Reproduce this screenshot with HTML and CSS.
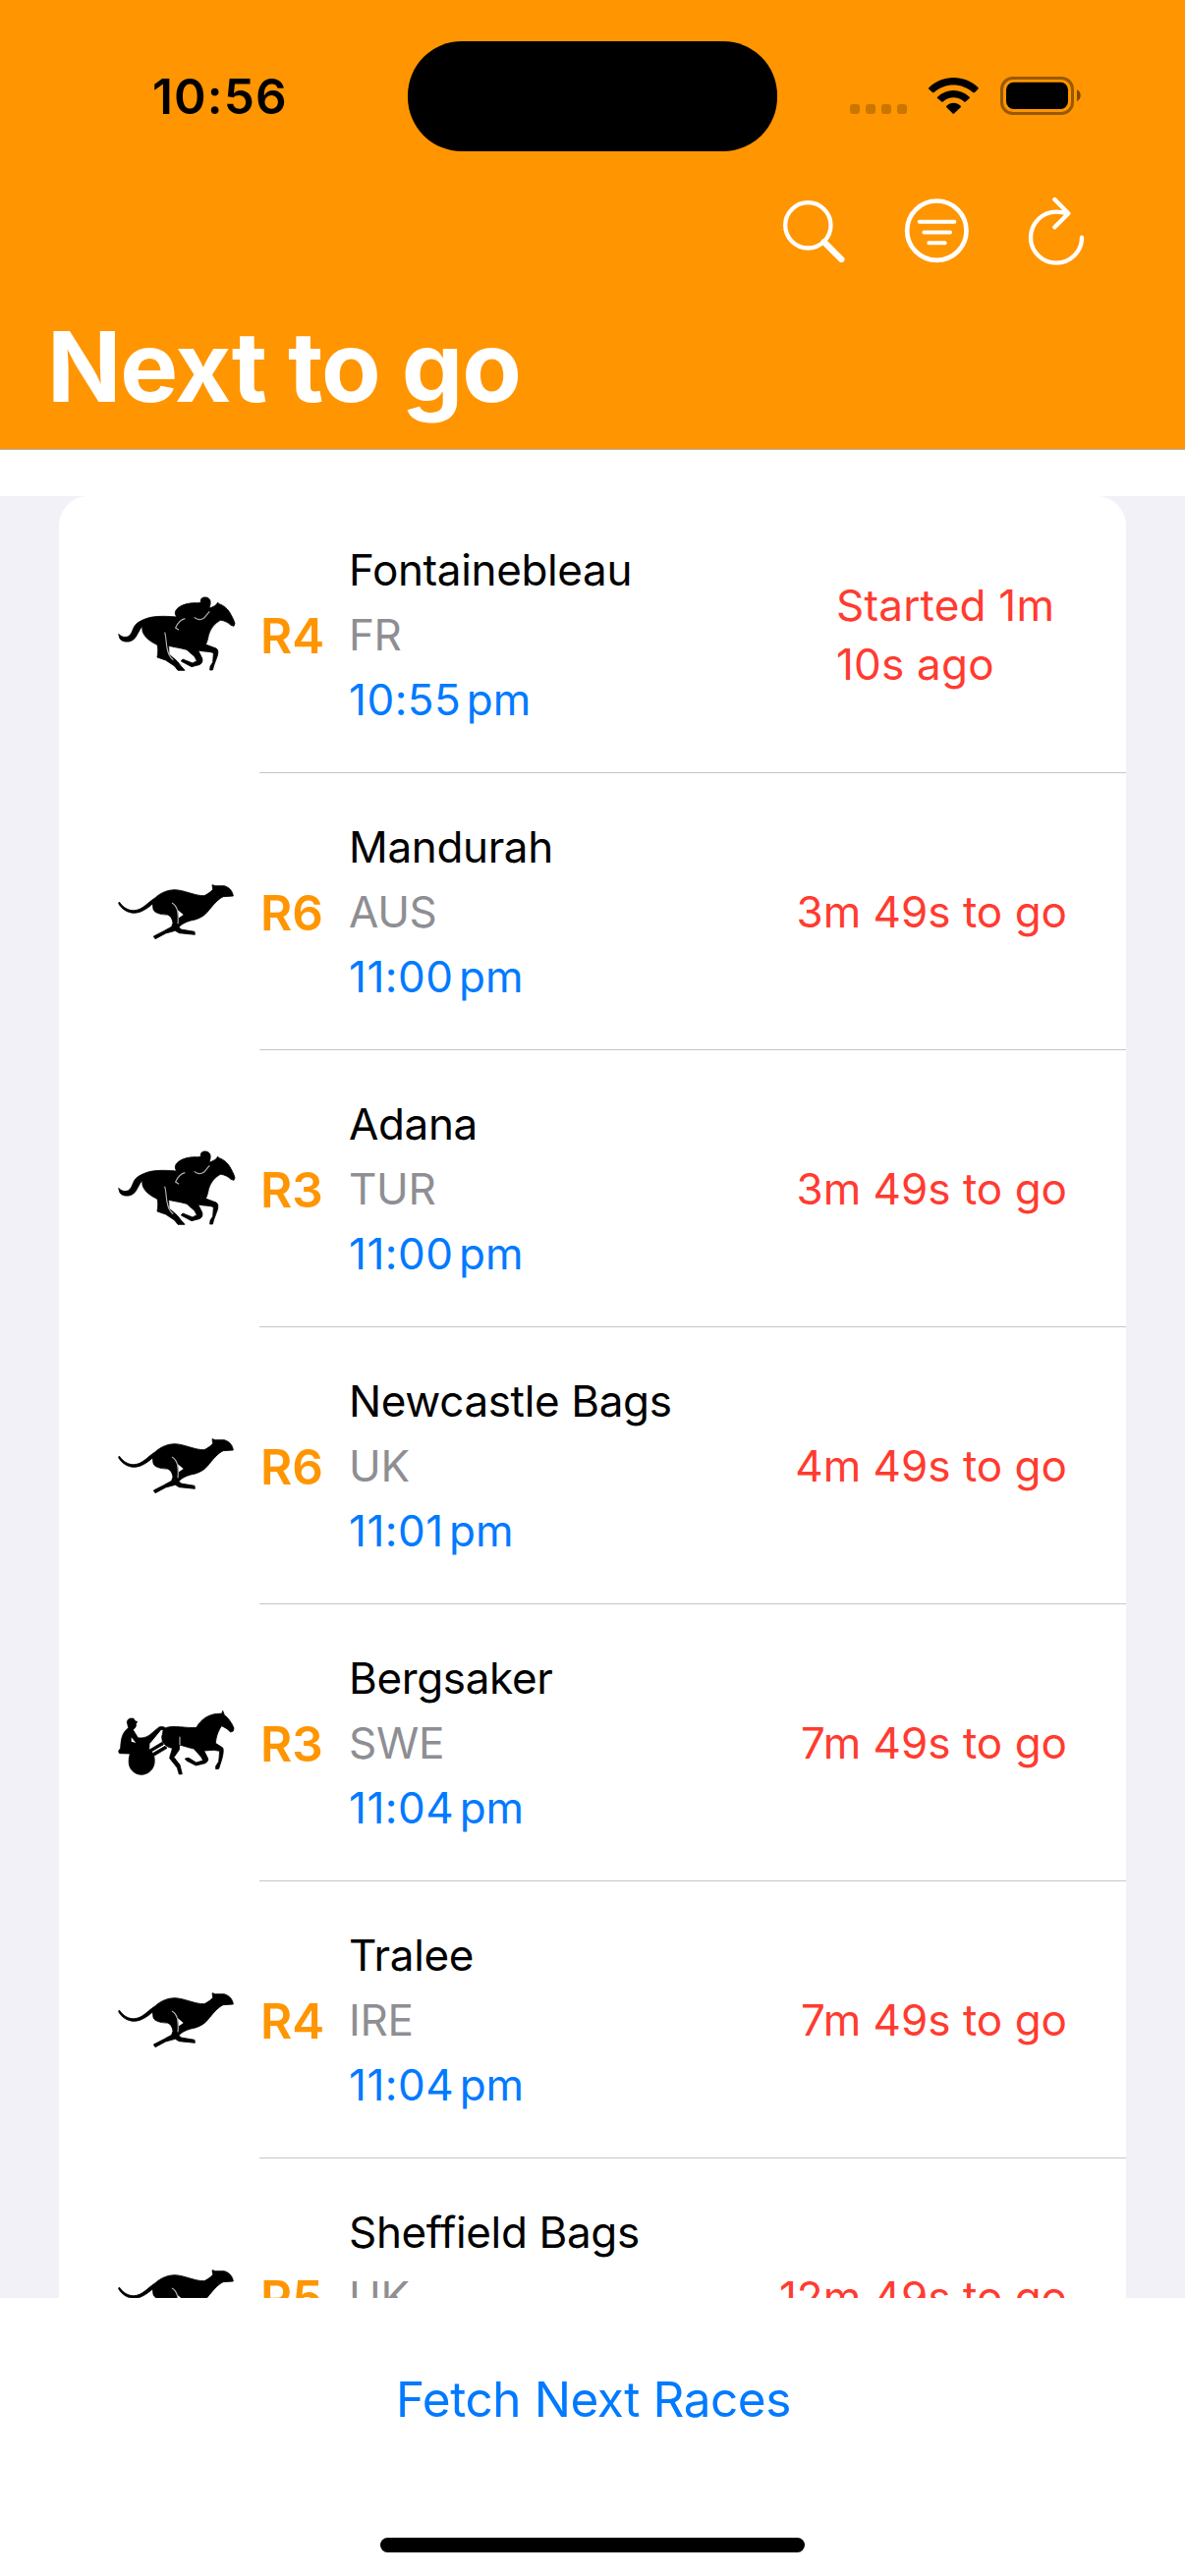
FILE: index.html
```html
<!DOCTYPE html>
<html lang="en">
<head>
<meta charset="utf-8">
<title>Next to go</title>
<link rel="stylesheet" href="styles.css">
</head>
<body>
<svg class="sprite" aria-hidden="true">
  <symbol id="horse" viewBox="60 42 360 252">
    <path class="shape" d="M62 166C70 175 82 178 92 173C106 165 104 143 120 132C132 124 146 118 160 115C186 110 215 112 240 114C234 107 232 97 242 88C254 76 276 71 297 71C304 72 309 71 313 70C311 58 318 53 328 54C340 55 344 64 342 75C341 81 340 84 339 87C346 85 350 83 355 80C361 78 362 73 365 70L369 74C384 79 393 88 400 98C406 108 414 122 417 134L414 142L405 139C397 131 384 124 373 124C356 133 343 149 337 169C334 184 332 191 328 198L360 210C367 214 366 222 364 232L353 262L349 276L341 276L342 265L350 252L352 224C341 218 323 221 305 216L317 240C320 252 315 260 300 262L285 266L253 249L258 243L288 255L301 248L294 235L270 214C249 208 230 206 215 202L216 228L240 248L252 263L264 277L243 277L233 264L206 246L180 237C183 222 183 208 180 199C158 189 142 176 136 160C134 154 135 147 134 143C124 152 120 173 106 184C94 193 72 190 66 180Z"/>
    <path class="cut" d="M203 161C208 177 207 196 210 208C213 226 218 238 229 245M265 119C253 121 242 134 236 147L246 154M293 115C302 123 313 124 323 117C329 110 334 103 340 97"/>
  </symbol>
  <symbol id="greyhound" viewBox="60 18 360 252">
    <path class="shape" d="M64 114C75 130 91 141 109 140C135 139 150 117 172 103C190 86 212 77 235 77C266 79 296 96 324 95C336 89 344 83 350 76L348 62L358 65L385 65C400 70 410 80 412 96L382 98C365 105 348 127 334 144C322 159 302 168 282 171C266 176 254 182 246 191L253 198L294 205L295 214L247 209L235 202L206 210L174 227L169 219L200 203L224 190L228 178C226 164 220 156 211 153C194 153 178 149 171 142C166 136 168 128 166 120C149 134 132 147 110 148C88 147 72 136 62 119Z"/>
    <path class="cut" d="M225 117C242 127 246 146 243 181"/>
    <path class="gap" d="M243 139L260 153L246 163Z"/>
  </symbol>
  <symbol id="harness" viewBox="60 36 360 252">
    <path class="shape" d="M88 98C90 88 98 86 108 88L113 96L119 97L115 104C117 113 110 119 106 122L121 146C134 149 147 145 158 137L182 117C189 110 198 112 205 116C235 107 266 118 300 115C308 99 323 84 344 77C357 72 368 74 378 72L380 64L385 77C396 85 407 99 414 117L412 126L404 129L393 119L377 110C368 121 360 141 358 163L380 177C384 185 380 206 373 225L368 241L359 242L359 233L368 219L371 187L353 184L323 186L335 210C336 218 331 223 320 226L298 231L269 216L265 210L276 208L299 222L320 216L314 205L292 180C276 177 261 171 248 168L247 183L231 206L249 229L256 257L247 258L241 238L218 209C219 198 225 188 226 178C212 175 205 171 196 158L194 143C197 134 198 127 198 121L191 122L164 155L156 164L155 184L195 160L199 167L163 188L166 194L204 172L210 178L170 202C174 220 171 236 160 247C144 263 119 263 104 247C92 235 91 216 97 195L65 194C60 189 63 182 68 180C69 159 71 139 82 126L92 116Z"/>
    <path class="cut" d="M249 143L249 168"/>
    <path class="gap" d="M101 145L115 162L101 158Z"/>
  </symbol>
</svg>

<div class="screen">
  <header class="header">
    <div class="status">
      <span class="clock">10:56</span>
      <div class="island"></div>
      <svg class="indicators" viewBox="60 60 741 162">
        <g opacity=".2"><rect x="75" y="168" width="30" height="30" rx="9"/><rect x="123" y="168" width="30" height="30" rx="9"/><rect x="171" y="168" width="30" height="30" rx="9"/><rect x="219" y="168" width="30" height="30" rx="9"/></g>
        <path d="M316 118C358 77 425 77 467 118Q468 120 466 122L456 132Q453 134 450 132C417 102 365 102 332 132Q329 134 327 132L316 122Q314 120 316 118ZM342 146C370 119 412 119 440 146Q442 148 440 150L429 160Q426 163 423 160C405 144 377 144 360 160Q357 163 354 160L342 150Q340 148 342 146ZM370 173C382 161 401 161 413 173Q415 175 413 178L394 196Q391 199 388 196L370 178Q368 175 370 173Z"/>
        <rect x="538.500" y="88.500" width="216" height="108" rx="34" fill="none" stroke="#000" stroke-width="9" opacity=".4"/>
        <rect x="552" y="101" width="189" height="82" rx="23"/>
        <path d="M768 124Q779 129 779 141.500T768 159Z" opacity=".5"/>
      </svg>
    </div>
    <nav class="toolbar">
      <svg class="tool" viewBox="99 60 216 216"><circle cx="187" cy="148" r="69.500" stroke-width="13"/><path d="M236 199L289 252" stroke-width="19"/></svg>
      <svg class="tool" viewBox="471 60 216 216"><circle cx="580" cy="164" r="90.500" stroke-width="14"/><path d="M527 137.500H634M541 169.500H621M556 201.500H605" stroke-width="12"/></svg>
      <svg class="tool" viewBox="843 60 216 216"><path d="M1023 185A78 78 0 1 1 945 107Q963 107 979 112M940 69L982 112L940 154" stroke-width="13"/></svg>
    </nav>
    <h1 class="title">Next to go</h1>
  </header>

  <main class="list">
    <ul class="card">
      <li class="race">
        <svg class="animal"><use href="#horse"/></svg>
        <div class="body"><b class="number">R4</b>
          <div class="details"><span>Fontainebleau</span><span class="country">FR</span><span class="time">10:55<span class="period">&#8239;pm</span></span></div>
          <span class="countdown started">Started 1m 10s ago</span></div>
      </li>
      <li class="race">
        <svg class="animal"><use href="#greyhound"/></svg>
        <div class="body"><b class="number">R6</b>
          <div class="details"><span>Mandurah</span><span class="country">AUS</span><span class="time">11:00<span class="period">&#8239;pm</span></span></div>
          <span class="countdown">3m 49s to go</span></div>
      </li>
      <li class="race">
        <svg class="animal"><use href="#horse"/></svg>
        <div class="body"><b class="number">R3</b>
          <div class="details"><span>Adana</span><span class="country">TUR</span><span class="time">11:00<span class="period">&#8239;pm</span></span></div>
          <span class="countdown">3m 49s to go</span></div>
      </li>
      <li class="race">
        <svg class="animal"><use href="#greyhound"/></svg>
        <div class="body"><b class="number">R6</b>
          <div class="details"><span>Newcastle Bags</span><span class="country">UK</span><span class="time">11:01<span class="period">&#8239;pm</span></span></div>
          <span class="countdown">4m 49s to go</span></div>
      </li>
      <li class="race">
        <svg class="animal"><use href="#harness"/></svg>
        <div class="body"><b class="number">R3</b>
          <div class="details"><span>Bergsaker</span><span class="country">SWE</span><span class="time">11:04<span class="period">&#8239;pm</span></span></div>
          <span class="countdown">7m 49s to go</span></div>
      </li>
      <li class="race">
        <svg class="animal"><use href="#greyhound"/></svg>
        <div class="body"><b class="number">R4</b>
          <div class="details"><span>Tralee</span><span class="country">IRE</span><span class="time">11:04<span class="period">&#8239;pm</span></span></div>
          <span class="countdown">7m 49s to go</span></div>
      </li>
      <li class="race">
        <svg class="animal"><use href="#greyhound"/></svg>
        <div class="body"><b class="number">R5</b>
          <div class="details"><span>Sheffield Bags</span><span class="country">UK</span></div>
          <span class="countdown">12m 49s to go</span></div>
      </li>
    </ul>
  </main>

  <footer class="footer">
    <button class="fetch">Fetch Next Races</button>
    <div class="home"></div>
  </footer>
</div>
</body>
</html>
```
FILE: styles.css
```css
* { box-sizing: border-box; }

body {
  margin: 0;
  background: #fff;
  font-family: Inter, "Liberation Sans", sans-serif;
  color: #000;
}

.sprite { display: none; }

.screen {
  display: flex;
  flex-direction: column;
  width: 1206px;
  height: 2622px;
  overflow: hidden;
}

/* Header */
.header {
  flex: none;
  height: 458px;
  padding-top: 42px;
  background: #ff9500;
  border-bottom: 1px solid #b2b2b2;
}

.status {
  display: grid;
  grid-template-columns: 415px 376px 1fr;
  height: 110px;
}

.clock {
  padding-left: 155px;
  font-size: 49.5px;
  font-weight: 600;
  line-height: 112px;
  letter-spacing: 1.1px;
}

.island {
  border-radius: 55px;
  background: #000;
}

.indicators {
  width: 247px;
  height: 54px;
  margin: 28px 0 0 69px;
}

.toolbar {
  display: flex;
  justify-content: flex-end;
  gap: 52px;
  margin-top: 48px;
  padding-right: 93px;
}

.tool {
  width: 72px;
  height: 72px;
  fill: none;
  stroke: #fff;
  stroke-linecap: round;
  stroke-linejoin: round;
}

.title {
  margin: 41px 0 0;
  padding-left: 48px;
  color: #fff;
  font-size: 99px;
  font-weight: 700;
  line-height: 120px;
  letter-spacing: -1.2px;
}

/* Race list */
.list {
  flex: none;
  height: 1834px;
  margin-top: 47px;
  padding: 0 60px;
  overflow: hidden;
  background: #f2f1f7;
}

.card {
  margin: 0;
  padding: 0;
  list-style: none;
  background: #fff;
  border-radius: 30px 30px 0 0;
}

.race {
  display: flex;
  align-items: center;
  gap: 24px;
  height: 282px;
  padding-left: 60px;
}

.animal {
  flex: none;
  width: 120px;
  height: 84px;
}

.shape {
  stroke: #000;
  stroke-width: 2.5;
  stroke-linejoin: round;
}

.cut {
  fill: none;
  stroke: #fff;
  stroke-width: 3.5;
  opacity: .7;
}

.gap { fill: #fff; }

.body {
  display: flex;
  flex: 1;
  align-items: center;
  height: 282px;
  padding-right: 60px;
  box-shadow: inset 0 -1px #c6c6c8;
}

.number {
  width: 91px;
  padding: 2px 0 0 1px;
  color: #ff9500;
  font-size: 49.5px;
  font-weight: 600;
  line-height: 60px;
}

.details {
  display: flex;
  flex: 1;
  flex-direction: column;
  height: 198px;
  font-size: 44px;
  line-height: 66px;
  letter-spacing: -.35px;
}

.country { color: #8e8e93; }

.time {
  color: #007aff;
  letter-spacing: .5px;
}

.period {
  margin-left: -2.5px;
  letter-spacing: 0;
}

.countdown {
  color: #ff3b30;
  font-size: 44px;
  line-height: 60px;
  letter-spacing: 0;
}

.started {
  width: 235px;
  letter-spacing: .2px;
}

/* Bottom action */
.footer {
  display: flex;
  flex: 1;
  flex-direction: column;
  align-items: center;
  justify-content: space-between;
  padding: 68px 0 24px;
}

.fetch {
  padding: 0 0 0 2px;
  border: 0;
  background: none;
  color: #007aff;
  font: 400 49.5px/70px Inter, "Liberation Sans", sans-serif;
  letter-spacing: -.45px;
}

.home {
  width: 432px;
  height: 15px;
  border-radius: 8px;
  background: #000;
}
```
